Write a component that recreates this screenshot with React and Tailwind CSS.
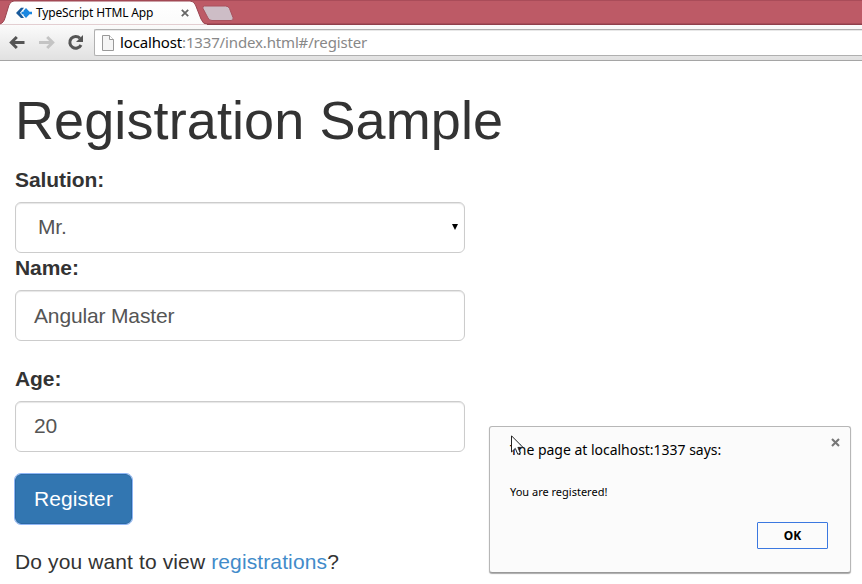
import React from "react";

function TabStrip() {
  return (
    <div className="relative h-[25px] shrink-0 bg-[#bd5a66]">
      <svg className="absolute inset-0" width="862" height="25" viewBox="0 0 862 25">
        <defs>
          <linearGradient id="tab" x1="0" y1="0" x2="0" y2="1">
            <stop offset="0" stopColor="#ffffff" />
            <stop offset="1" stopColor="#fbfbfb" />
          </linearGradient>
        </defs>
        <rect width="862" height="1" fill="#a94c59" />
        <rect y="23" width="862" height="1" fill="#a84d59" />
        <rect y="24" width="862" height="1" fill="#8f3f4b" />
        <path d="M0 25V24C3 23 4 21 5 18L9 5Q10.500 1 14 1H190Q194 1 195.500 5L201 19Q203 24 207 24.500V25Z" fill="url(#tab)" stroke="#9a4551" strokeWidth="1" />
        <path d="M0 24.500H207V25H0Z" fill="#fbfbfb" />
        <path d="M204.500 6H225.500Q228.500 6 229.500 8.500L233 17.500Q234 20.500 231 20.500H212Q209 20.500 208 18L203 8.500Q202 6 204.500 6Z" fill="#cdbdc6" stroke="#a9515d" strokeWidth="1" />
      </svg>
      <div className="relative flex h-[25px] items-center pl-4">
        <svg width="16" height="12" viewBox="0 0 16 12" className="mt-px shrink-0">
          <path d="M5 .8H8L4 5.800L8 11H5L0 6Z" fill="#17599a" />
          <path d="M10 1L13.500 4.800H16V7.200H13.500L10 11L7.500 8.300V7.200H5.500V4.800H7.500V3.700Z" fill="#1b87e0" />
        </svg>
        <span className="ml-1 w-[145px] whitespace-nowrap font-['Noto_Sans',sans-serif] text-[12px] leading-4 tracking-[-0.16px] text-black">TypeScript HTML App</span>
        <svg width="8" height="8" viewBox="0 0 8 8" className="shrink-0">
          <path d="M.8 .8L7.200 7.200M7.200 .8L.8 7.200" stroke="#666" strokeWidth="1.800" />
        </svg>
      </div>
    </div>
  );
}

function Toolbar() {
  return (
    <div className="flex h-9 shrink-0 items-start border-b border-[#a5a5a5] bg-linear-to-b from-[#fbfbfb] to-[#e1e1e1]">
      <svg width="94" height="35" viewBox="0 0 94 35" className="shrink-0" fill="none">
        <path d="M24.500 17.500H12M16.800 12L11.300 17.500L16.800 23" stroke="#555" strokeWidth="3" />
        <path d="M39 17.500H52M47.200 12L52.700 17.500L47.200 23" stroke="#c4c4c4" strokeWidth="3" />
        <path d="M80 13.300A5.900 5.900 0 1 0 81 20" stroke="#555" strokeWidth="3" />
        <path d="M83 10V17H76Z" fill="#555" />
      </svg>
      <div className="mt-1 flex h-[27px] flex-1 items-center rounded-l-[2px] border border-r-0 border-[#b0b0b0] bg-white pl-[7px] shadow-[inset_0_1px_0_#e8e8e8]">
        <svg width="12" height="16" viewBox="0 0 12 16" className="shrink-0">
          <path d="M.5 .5H7.500L11.500 4.500V15.500H.5Z" fill="#f5f5f5" stroke="#999" />
          <path d="M7.500 .5V4.500H11.500" fill="#fff" stroke="#999" />
        </svg>
        <span className="mb-[2px] ml-[6px] whitespace-nowrap font-['Noto_Sans',sans-serif] text-[15px] leading-5 tracking-[-0.15px] text-[#888]">
          <span className="text-black">localhost</span>:1337/index.html#/register
        </span>
      </div>
    </div>
  );
}

function Label({ children }) {
  return <label className="block h-[30px] font-bold leading-[30px] tracking-[-0.08px]">{children}</label>;
}

function Field({ children, className = "pb-px" }) {
  return (
    <div className={`mt-[7px] flex h-[51px] w-[450px] items-center rounded-[6px] border border-[#ccc] bg-white pl-[18px] tracking-[-0.15px] text-[#555] shadow-[inset_0_1px_1px_rgba(0,0,0,0.1)] ${className}`}>
      {children}
    </div>
  );
}

function AlertDialog() {
  return (
    <div className="absolute left-[489px] top-[426px] h-[147px] w-[362px] rounded-[3px] border border-[#b7b7b7] border-b-[#999] bg-[#fbfbfb] font-['Noto_Sans',sans-serif] text-black shadow-[0_1px_1px_#aaa]">
      <div className="flex justify-between pl-5 pr-[10px] pt-[10px]">
        <span className="whitespace-nowrap text-[14px] leading-[26px] tracking-[-0.02px]">The page at localhost:1337 says:</span>
        <svg width="9" height="9" viewBox="0 0 9 9" className="mt-[1px]">
          <path d="M1 1L8 8M8 1L1 8" stroke="#777" strokeWidth="2.100" />
        </svg>
      </div>
      <p className="ml-5 mt-[21px] whitespace-nowrap text-[11px] leading-4">You are registered!</p>
      <button className="ml-[267px] mt-[22px] flex h-[27px] w-[71px] items-center justify-center rounded-[1px] border border-[#3b78e0] bg-[#fbfbfb] text-[12px] font-bold">OK</button>
      <svg className="absolute left-[21px] top-[8px]" width="14" height="22" viewBox="0 0 14 22">
        <path d="M.5 .8V17L4.300 13.400L6.800 19.300L9.400 18.200L6.900 12.400H12Z" fill="#fff" stroke="#222" strokeWidth="1" />
      </svg>
    </div>
  );
}

export default function App() {
  return (
    <div className="relative flex h-[584px] w-[862px] flex-col overflow-hidden bg-white">
      <TabStrip />
      <Toolbar />
      <main className="px-[15px] font-['Liberation_Sans',Arial,sans-serif] text-[21px] leading-[30px] text-[#333]">
        <h1 className="mt-[29px] h-[60px] whitespace-nowrap text-[54px] leading-[60px] tracking-[0.1px]">Registration Sample</h1>
        <div className="mt-[15px]">
          <Label>Salution:</Label>
          <Field>
            <span className="flex-1 pl-1">Mr.</span>
            <svg width="6" height="6" viewBox="0 0 6 6" className="mr-[6px]">
              <path d="M0 0H6L3 6Z" fill="#000" />
            </svg>
          </Field>
        </div>
        <Label>Name:</Label>
        <Field className="pb-0">Angular Master</Field>
        <div className="mt-[23px]">
          <Label>Age:</Label>
          <Field>20</Field>
        </div>
        <button className="mt-[22px] flex h-[50px] w-[117px] items-center justify-center rounded-[6px] border border-[#2b69a3] bg-[#3276b1] tracking-[0.1px] text-white outline-1 outline-[#8fb6f5]">Register</button>
        <p className="mt-[23px] tracking-[0.12px]">
          Do you want to view <span className="text-[#428bca]">registrations</span>?
        </p>
      </main>
      <AlertDialog />
    </div>
  );
}
